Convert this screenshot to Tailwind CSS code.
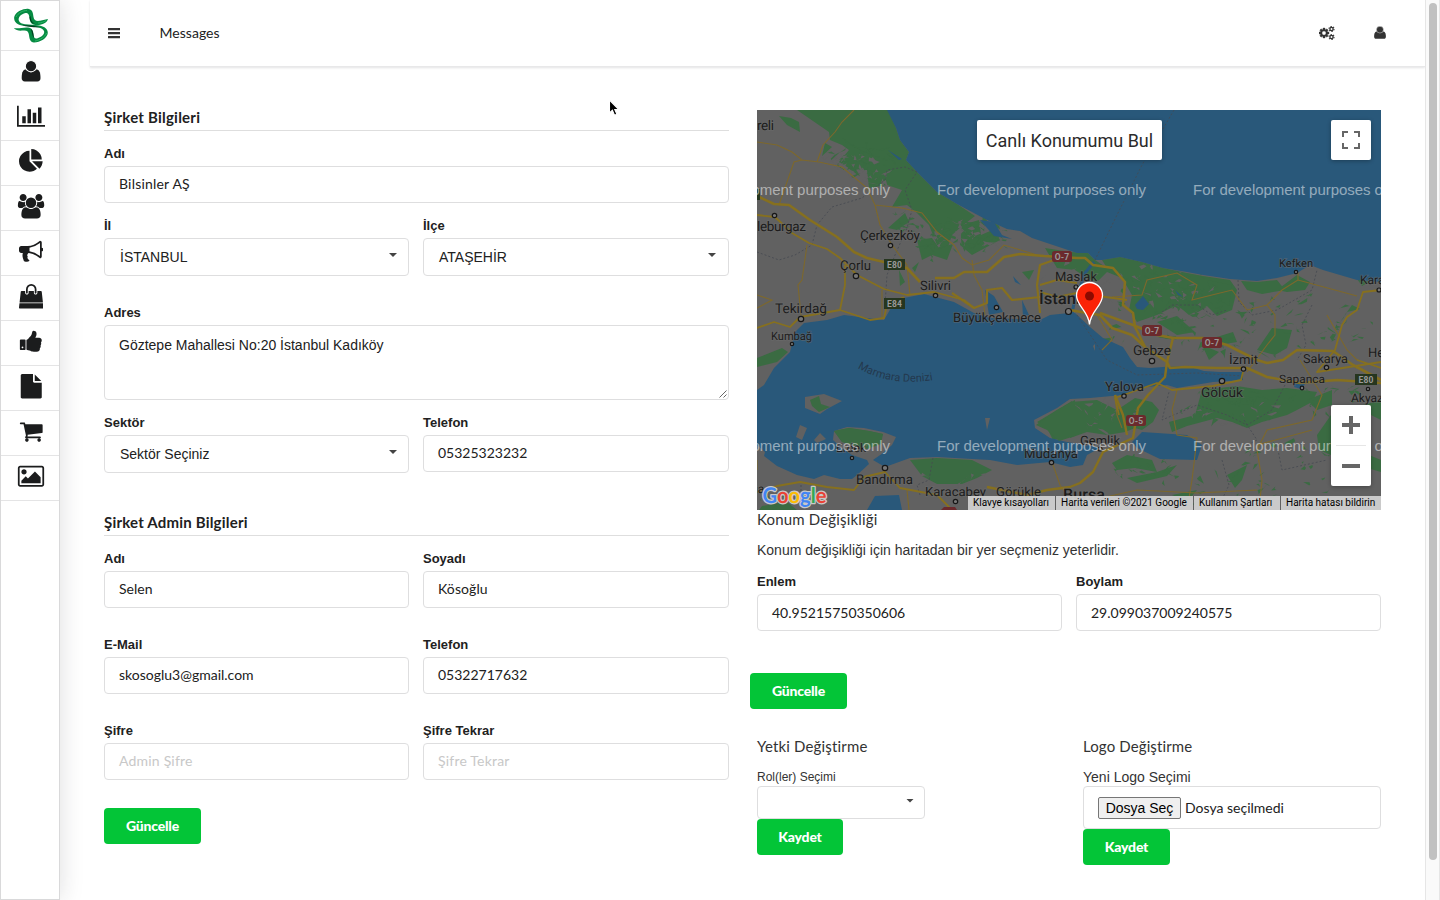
<!DOCTYPE html>
<html lang="tr">
<head>
<meta charset="utf-8">
<title>Şirket Bilgileri</title>
<script src="https://cdn.jsdelivr.net/npm/@tailwindcss/browser@4"></script>
</head>
<body class="bg-white text-[#212121] font-['Lato','Liberation_Sans',sans-serif] text-sm overflow-hidden">
<div class="flex h-[900px] w-[1440px]">

  <!-- Sidebar -->
  <aside class="w-[60px] shrink-0 h-full border border-[#d9d9da] bg-white shadow-[0_0_24px_rgba(34,36,38,0.15)] text-[#1b1c1d] [clip-path:inset(0_-30px_0_0)]">
    <div class="h-[50px] border-b border-[#e4e4e5] flex justify-center pt-[7px]">
      <svg class="w-9 h-9 ml-px" viewBox="0 0 36 36">
        <path d="M9 17.500C3 17 0 12 1.500 8C3.500 3.500 10 .5 15 .8C19.500 1.500 20 5 20.500 9C21 12.500 23 13.300 27 12.800L35 11C34 14.500 30 17 24 17C18.500 17 17 14.500 16.500 10C16 6.500 15.500 5 12.500 5C8 6 4.500 9.500 6 13C6.800 15 9 15.800 12 16.200L22 17C30 17.500 35 20 34.800 25C34.500 30 27 34.500 21 34.500C17 34 16.500 31 16 27C15.500 23.500 14 22.200 10 22.600C6 23 3 22.500 .8 20C6 21 10 19 15 19.500C19 20 20.200 22.500 20.500 26C20.800 29.500 21.500 31 24 30.500C29 29 32 26 31 23C30 20.500 27 19.500 22 19Z" fill="#068a42"/>
        <path d="M9 17.500C15 17 22 18 27 19.200C21 19.300 14 19 9 17.500ZM17.500 8C18 12 18.500 14.500 22 15.500C18.500 15.500 16.800 13 16.500 9ZM19 22C20.500 24.500 20.300 27 21 30C19 28 19.300 24 17.800 21Z" fill="#05371f"/>
        <path d="M3 9C5 5 10 2.500 14 2.400M22 33C27 32 32 29 33.500 25M25 15C28 15 31 14 33 12.500" fill="none" stroke="#2fb768" stroke-width=".9"/>
      </svg>
    </div>
    <div class="h-[45px] border-b border-[#e4e4e5] flex justify-center pt-[8.25px] pl-0.5">
      <svg class="h-[24.5px] w-7" viewBox="0 0 28 24.5" fill="currentColor"><path d="M4.700 19C4.700 12.500 6.500 10.300 9.500 10.300H18.700C21.700 10.300 23.500 12.500 23.500 19C23.500 21 22.300 22.600 20.400 22.600H7.800C5.900 22.600 4.700 21 4.700 19Z"/><circle cx="14" cy="7.200" r="5.700" stroke="#fff" stroke-width="1.100"/></svg>
    </div>
    <div class="h-[45px] border-b border-[#e4e4e5] flex justify-center pt-[8.25px] pl-0.5">
      <svg class="h-[24.5px] w-7" viewBox="0 0 2048 1792" fill="currentColor"><path d="M640 896v512h-256v-512h256zm384-512v1024h-256v-1024h256zm1024 1152v128h-2048v-1536h128v1408h1920zm-640-896v768h-256v-768h256zm384-384v1152h-256v-1152h256z"/></svg>
    </div>
    <div class="h-[45px] border-b border-[#e4e4e5] flex justify-center pt-[8.25px] pl-0.5">
      <svg class="h-[24.5px] w-[24.5px]" viewBox="0 0 1792 1792" fill="currentColor"><path d="M768 890l546 546q-106 108-247.500 168t-298.500 60q-209 0-385.500-103t-279.500-279.500-103-385.500 103-385.500 279.500-279.500 385.500-103v762zm187 6h773q0 157-60 298.500t-168 247.500zm709-128h-768v-768q209 0 385.500 103t279.500 279.500 103 385.500z"/></svg>
    </div>
    <div class="h-[45px] border-b border-[#e4e4e5] flex justify-center pt-[8.25px] pl-0.5">
      <svg class="h-[24.5px] w-7" viewBox="0 0 2048 1792" fill="currentColor"><path d="M657 896q-162 5-265 128h-134q-82 0-138-40.500t-56-118.500q0-353 124-353 6 0 43.500 21t97.500 42.500 119 21.500q67 0 133-23-5 37-5 66 0 159 90 256zm1071 637q0 120-73 189.500t-194 69.500h-874q-121 0-194-69.500t-73-189.500q0-53 3.500-103.500t14-109 26.500-108.500 43-97.500 62-81 85.500-53.500 111.500-20q10 0 43 21.500t73 48 107 48 135 21.500 135-21.500 107-48 73-48 43-21.500q61 0 111.500 20t85.500 53.500 62 81 43 97.500 26.500 108.500 14 109 3.500 103.500zm-1024-1277q0 106-75 181t-181 75-181-75-75-181 75-181 181-75 181 75 75 181zm704 384q0 159-112.500 271.500t-271.500 112.500-271.500-112.500-112.500-271.500 112.500-271.500 271.500-112.500 271.500 112.500 112.500 271.500zm576 225q0 78-56 118.500t-138 40.500h-134q-103-123-265-128 90-97 90-256 0-29-5-66 66 23 133 23 59 0 119-21.500t97.500-42.500 43.500-21q124 0 124 353zm-128-609q0 106-75 181t-181 75-181-75-75-181 75-181 181-75 181 75 75 181z"/></svg>
    </div>
    <div class="h-[45px] border-b border-[#e4e4e5] flex justify-center pt-[8.25px] pl-0.5">
      <svg class="h-[24.5px] w-[24.5px]" viewBox="0 0 1792 1792" fill="currentColor"><path d="M1664 640q53 0 90.500 37.500t37.500 90.500-37.500 90.500-90.500 37.500v384q0 52-38 90t-90 38q-417-347-812-380-58 19-91 66t-31 100.500 40 92.500q-20 33-23 65.500t6 58 33.500 55 48 50 61.500 50.500q-29 58-111.500 83t-168.500 11.500-132-55.500q-7-23-29.500-87.500t-32-94.500-23-89-15-101 3.500-98.500 22-110.500h-122q-66 0-113-47t-47-113v-192q0-66 47-113t113-47h480q435 0 896-384 52 0 90 38t38 90v384zm-128 604v-954q-394 302-768 343v270q377 42 768 341z"/></svg>
    </div>
    <div class="h-[45px] border-b border-[#e4e4e5] flex justify-center pt-[8.25px] pl-0.5">
      <svg class="h-[24.5px] w-[24.5px]" viewBox="0 0 1792 1792" fill="currentColor"><path d="M1757 1408l35 313q3 28-16 50-19 21-48 21h-1664q-29 0-48-21-19-22-16-50l35-313h1722zm-93-839l86 775h-1708l86-775q3-24 21-40.500t43-16.500h256v128q0 53 37.500 90.500t90.500 37.500 90.500-37.500 37.500-90.500v-128h384v128q0 53 37.500 90.500t90.500 37.500 90.500-37.500 37.500-90.500v-128h256q25 0 43 16.500t21 40.500zm-384-185v256q0 26-19 45t-45 19-45-19-19-45v-256q0-106-75-181t-181-75-181 75-75 181v256q0 26-19 45t-45 19-45-19-19-45v-256q0-159 112.500-271.500t271.500-112.500 271.500 112.500 112.500 271.500z"/></svg>
    </div>
    <div class="h-[45px] border-b border-[#e4e4e5] flex justify-center pt-[8.25px] pl-0.5">
      <svg class="h-[24.5px] w-[24.5px]" viewBox="0 0 1792 1792" fill="currentColor"><path d="M320 1344q0-26-19-45t-45-19q-27 0-45.500 19t-18.500 45q0 27 18.500 45.500t45.500 18.500q26 0 45-18.500t19-45.500zm160-512v640q0 26-19 45t-45 19h-288q-26 0-45-19t-19-45v-640q0-26 19-45t45-19h288q26 0 45 19t19 45zm1184 0q0 86-55 149 15 44 15 76 3 76-43 137 17 56 0 117-15 57-54 94 9 112-49 181-64 76-197 78h-129q-66 0-144-15.500t-121.500-29-120.500-39.500q-123-43-158-44-26-1-45-19.500t-19-44.500v-641q0-25 18-43.500t43-20.500q24-2 76-59t101-121q68-87 101-120 18-18 31-48t17.500-48.500 13.500-60.500q7-39 12.500-61t19.500-52 34-50q19-19 45-19 46 0 82.500 10.500t60 26 40 40.500 24 45 12 50 5 45 .5 39q0 38-9.500 76t-19 60-27.500 56q-3 6-10 18t-11 22-8 24h277q78 0 135 57t57 135z"/></svg>
    </div>
    <div class="h-[45px] border-b border-[#e4e4e5] flex justify-center pt-[8.25px] pl-0.5">
      <svg class="h-[24.5px] w-[24.5px]" viewBox="0 0 1792 1792" fill="currentColor"><path d="M1152 512v-472q22 14 36 28l408 408q14 14 28 36h-472zm-128 32q0 40 28 68t68 28h544v1056q0 40-28 68t-68 28h-1344q-40 0-68-28t-28-68v-1600q0-40 28-68t68-28h800v544z"/></svg>
    </div>
    <div class="h-[45px] border-b border-[#e4e4e5] flex justify-center pt-[8.25px] pl-0.5">
      <svg class="h-[24.5px] w-[24.5px]" viewBox="0 0 1792 1792" fill="currentColor"><path d="M704 1536q0 52-38 90t-90 38-90-38-38-90 38-90 90-38 90 38 38 90zm896 0q0 52-38 90t-90 38-90-38-38-90 38-90 90-38 90 38 38 90zm128-1088v512q0 24-16.500 42.500t-40.500 21.500l-1044 122q13 60 13 70 0 16-24 64h920q26 0 45 19t19 45-19 45-45 19h-1024q-26 0-45-19t-19-45q0-11 8-31.500t16-36 21.500-40 15.500-29.500l-177-823h-204q-26 0-45-19t-19-45 19-45 45-19h256q16 0 28.500 6.500t19.500 15.500 13 24.500 8 26 5.500 29.500 4.500 26h1201q26 0 45 19t19 45z"/></svg>
    </div>
    <div class="h-[45px] border-b border-[#e4e4e5] flex justify-center pt-[8.25px] pl-0.5">
      <svg class="h-[24.5px] w-7" viewBox="0 0 2048 1792" fill="currentColor"><path d="M704 576q0 80-56 136t-136 56-136-56-56-136 56-136 136-56 136 56 56 136zm1024 384v448h-1408v-192l320-320 160 160 512-512zm96-704h-1600q-13 0-22.500 9.500t-9.500 22.500v1216q0 13 9.500 22.500t22.500 9.500h1600q13 0 22.500-9.500t9.500-22.500v-1216q0-13-9.500-22.500t-22.500-9.500zm160 32v1216q0 66-47 113t-113 47h-1600q-66 0-113-47t-47-113v-1216q0-66 47-113t113-47h1600q66 0 113 47t47 113z"/></svg>
    </div>
  </aside>

  <div class="w-[1365px] shrink-0 pl-[30px]">
    <!-- Top bar -->
    <header class="h-[67px] bg-white border-b border-[#e8e8e9] shadow-[0_1px_2px_rgba(34,36,38,0.12)] flex items-center text-[#333]">
      <svg class="ml-[18px] w-3 h-3" viewBox="0 0 12 12" fill="currentColor"><rect y="1" width="12.300" height="2.200" rx=".3"/><rect y="5" width="12.300" height="2.200" rx=".3"/><rect y="9" width="12.300" height="2.200" rx=".3"/></svg>
      <span class="ml-[39.500px] text-[14px] tracking-[0.03px] text-[#212121]">Messages</span>
      <svg class="ml-auto w-[16px] h-[14px]" viewBox="0 0 2048 1792" fill="currentColor">
        <path d="M896 896q0-106-75-181t-181-75-181 75-75 181 75 181 181 75 181-75 75-181zm384-91v185q0 10-7 19.500t-16 10.500l-155 24q-11 35-32 76 34 48 90 115 7 11 7 20 0 12-7 19-23 30-82.500 89.500t-78.500 59.500q-11 0-21-7l-115-90q-37 19-77 31-11 108-23 155-7 24-30 24h-186q-11 0-20-7.500t-10-17.500l-23-153q-34-10-75-31l-118 89q-7 7-20 7-11 0-21-8-144-133-144-160 0-9 7-19 10-14 41-53t47-61q-23-44-35-82l-152-24q-10-1-17-9.500t-7-19.500v-185q0-10 7-19.500t16-10.500l155-24q11-35 32-76-34-48-90-115-7-11-7-20 0-12 7-20 22-30 82-89t79-59q11 0 21 7l115 90q34-18 77-32 11-108 23-154 7-24 30-24h186q11 0 20 7.500t10 17.500l23 153q34 10 75 31l118-89q8-7 20-7 11 0 21 8 144 133 144 160 0 8-7 19-12 16-42 54t-45 60q23 48 34 82l152 23q10 2 17 10.500t7 19.500z" stroke="currentColor" stroke-width="50"/>
        <g fill="none" stroke="currentColor"><circle cx="1600" cy="384" r="210" stroke-width="170"/><circle cx="1600" cy="384" r="330" stroke-width="130" stroke-dasharray="173 172.500"/><circle cx="1600" cy="1408" r="210" stroke-width="170"/><circle cx="1600" cy="1408" r="330" stroke-width="130" stroke-dasharray="173 172.500"/></g>
      </svg>
      <svg class="ml-[39.500px] mr-[39px] w-[12px] h-[13px] mb-px" viewBox="4.500 1 19.200 22" preserveAspectRatio="none" fill="currentColor"><path d="M4.700 19C4.700 12.500 6.500 10.300 9.500 10.300H18.700C21.700 10.300 23.500 12.500 23.500 19C23.500 21 22.300 22.600 20.400 22.600H7.800C5.900 22.600 4.700 21 4.700 19Z"/><circle cx="14" cy="7.200" r="5.700" stroke="#fff" stroke-width=".7"/></svg>
    </header>

    <main class="flex pl-[14px] pt-[43px]">
      <!-- Company form -->
      <section class="w-[625px] shrink-0">
        <h4 class="h-[21px] border-b border-[#dedede] text-[15px] leading-[14px] font-bold tracking-[0.23px]">Şirket Bilgileri</h4>
        <label class="block mt-[15px] h-4 leading-4 mb-1 text-[13px] font-bold font-['Liberation_Sans',sans-serif]">Adı</label>
        <div class="h-[37px] border border-[#dededf] rounded flex items-center px-[14px] pb-px tracking-[0.2px]">Bilsinler AŞ</div>
        <div class="mt-[15px] grid grid-cols-[305px_306px] gap-[14px]">
          <div>
            <label class="block h-4 leading-4 mb-1 text-[13px] font-bold font-['Liberation_Sans',sans-serif]">İl</label>
            <div class="h-[38px] border border-[#dededf] rounded flex items-center justify-between pl-[15px] pr-[11px] font-['Liberation_Sans',sans-serif]">İSTANBUL<svg class="w-2 h-1 mb-1" viewBox="0 0 8 4"><path d="M0 0H8L4 4Z" fill="#444"/></svg></div>
          </div>
          <div>
            <label class="block h-4 leading-4 mb-1 text-[13px] font-bold font-['Liberation_Sans',sans-serif]">İlçe</label>
            <div class="h-[38px] border border-[#dededf] rounded flex items-center justify-between pl-[15px] pr-[12px] font-['Liberation_Sans',sans-serif]">ATAŞEHİR<svg class="w-2 h-1 mb-1" viewBox="0 0 8 4"><path d="M0 0H8L4 4Z" fill="#444"/></svg></div>
          </div>
        </div>
        <label class="block mt-[29px] h-4 leading-4 mb-1 text-[13px] font-bold font-['Liberation_Sans',sans-serif]">Adres</label>
        <div class="h-[75px] border border-[#dededf] rounded flex justify-between pl-[14px] pt-[10px] font-['Liberation_Sans',sans-serif] leading-[18px]">Göztepe Mahallesi No:20 İstanbul Kadıköy<svg class="self-end w-2 h-2 mr-[1px] mb-[1px]" viewBox="0 0 8 8" stroke="#555" stroke-width=".9"><path d="M0.500 7.500L7.500 0.500M4.500 7.500L7.500 4.500"/></svg></div>
        <div class="mt-[15px] grid grid-cols-[305px_306px] gap-[14px]">
          <div>
            <label class="block h-4 leading-4 mb-1 text-[13px] font-bold font-['Liberation_Sans',sans-serif]">Sektör</label>
            <div class="h-[38px] border border-[#dededf] rounded flex items-center justify-between pl-[15px] pr-[11px] font-['Liberation_Sans',sans-serif]">Sektör Seçiniz<svg class="w-2 h-1 mb-1" viewBox="0 0 8 4"><path d="M0 0H8L4 4Z" fill="#444"/></svg></div>
          </div>
          <div>
            <label class="block h-4 leading-4 mb-1 text-[13px] font-bold font-['Liberation_Sans',sans-serif]">Telefon</label>
            <div class="h-[37px] border border-[#dededf] rounded flex items-center px-[14px] pb-px">05325323232</div>
          </div>
        </div>

        <h4 class="mt-[42px] h-[21px] border-b border-[#dedede] text-[15px] leading-[14px] font-bold tracking-[0.2px]">Şirket Admin Bilgileri</h4>
        <div class="mt-[15px] grid grid-cols-[305px_306px] gap-x-[14px] gap-y-[29px]">
          <div>
            <label class="block h-4 leading-4 mb-1 text-[13px] font-bold font-['Liberation_Sans',sans-serif]">Adı</label>
            <div class="h-[37px] border border-[#dededf] rounded flex items-center px-[14px] pb-px">Selen</div>
          </div>
          <div>
            <label class="block h-4 leading-4 mb-1 text-[13px] font-bold font-['Liberation_Sans',sans-serif]">Soyadı</label>
            <div class="h-[37px] border border-[#dededf] rounded flex items-center px-[14px] pb-px tracking-[0.1px]">Kösoğlu</div>
          </div>
          <div>
            <label class="block h-4 leading-4 mb-1 text-[13px] font-bold font-['Liberation_Sans',sans-serif]">E-Mail</label>
            <div class="h-[37px] border border-[#dededf] rounded flex items-center px-[14px] pb-px">skosoglu3@gmail.com</div>
          </div>
          <div>
            <label class="block h-4 leading-4 mb-1 text-[13px] font-bold font-['Liberation_Sans',sans-serif]">Telefon</label>
            <div class="h-[37px] border border-[#dededf] rounded flex items-center px-[14px] pb-px">05322717632</div>
          </div>
          <div>
            <label class="block h-4 leading-4 mb-1 text-[13px] font-bold font-['Liberation_Sans',sans-serif]">Şifre</label>
            <div class="h-[37px] border border-[#dededf] rounded flex items-center px-[14px] pb-px tracking-[0.2px] text-[#c8c8c8]">Admin Şifre</div>
          </div>
          <div>
            <label class="block h-4 leading-4 mb-1 text-[13px] font-bold font-['Liberation_Sans',sans-serif]">Şifre Tekrar</label>
            <div class="h-[37px] border border-[#dededf] rounded flex items-center px-[14px] pb-px tracking-[0.2px] text-[#c8c8c8]">Şifre Tekrar</div>
          </div>
        </div>
        <button class="mt-[28px] block w-[97px] h-9 rounded bg-[#03c537] text-white font-black tracking-[-0.2px] pb-px">Güncelle</button>
      </section>

      <!-- Location and settings -->
      <section class="w-[624px] shrink-0 ml-[28px]">
        <div class="relative h-[400px] overflow-hidden bg-[#616161] font-['Roboto',sans-serif]">
          <svg class="block w-[624px] h-[400px]" viewBox="0 0 624 400">
            <rect width="624" height="400" fill="#616161"/>
            <g fill="#3a6b42">
              <path d="M40 0H131L139 18L143 30L152 42L149 50L160 62L180 82L200 94L218 106L205 116L195 125L190 140L180 135L172 115L160 103L150 95L135 97L145 80L130 75L112 78L110 60L95 60L82 52L92 40L85 35L73 30L72 22Z"/>
              <path d="M22 6L34 8L42 12L43 22L30 15ZM68 33L75 37L65 46ZM131 118L148 103L152 112L140 120ZM160 130L175 128L182 138L196 134L190 150L175 145L165 150ZM205 115L222 110L224 125L240 118L243 130L228 138L215 145L203 135ZM155 158L162 152L158 162ZM142 160L148 172L143 176Z"/>
              <path d="M288 138L313 142L331 143L338 150L350 158L345 150L363 147L385 152L406 158L430 163L446 166L473 170L480 180L475 200L460 206L450 196L432 205L420 195L400 205L380 212L372 200L375 185L365 168L350 162L340 172L330 168L318 160L300 158Z"/>
              <path d="M484 171L500 172L520 170L528 180L505 184L490 180ZM520 180L540 165L553 172L548 180L530 182ZM450 170L475 175L472 196L455 185ZM595 195L603 199L590 202ZM400 212L420 206L438 222L420 225ZM450 230L476 222L480 232L462 235ZM445 235L462 242L452 250ZM515 218L535 220L530 238L518 245L500 240Z"/>
              <path d="M313 292L340 290L360 300L378 288L395 292L402 300L396 312L385 320L378 318L368 322L350 325L330 322L313 328Z"/>
              <path d="M438 305L445 280L480 276L505 280L530 278L560 282L555 292L540 300L530 305L505 312L490 318L475 312L460 308L430 316L415 322L412 312Z"/>
              <path d="M560 325L574 305L574 345L562 340ZM550 290L575 280L575 295L560 300ZM606 295L624 290V310L614 305Z"/>
              <path d="M355 353L370 345L395 350L400 362L378 358L360 360ZM370 368L400 362L420 355L410 366L380 373Z"/>
              <path d="M470 365L490 355L485 370L478 378ZM415 385L440 380L430 392ZM590 335L612 345L624 350V362L600 355Z"/>
              <path d="M153 350L180 348L215 350L235 360L220 368L205 374L180 374L165 366ZM77 321L92 318L112 321L126 324L122 332L110 338L85 332ZM280 312L300 300L315 291V326L296 330L290 318Z"/>
              <path d="M0 248L25 238L31 242L20 252L0 257ZM265 162L277 160L272 170ZM5 396L30 392L40 400H2ZM598 166L612 172L605 176Z"/>
            </g>
            <g id="woods"></g>
            <!-- Sea, straits and lakes -->
            <g fill="#29587a">
              <path d="M130 0L139 18L143 30L152 42L149 50L160 62L180 82L200 94L230 110L250 119L263 121L275 128L287 132L320 143L331 143L338 150L345 150L363 147L385 152L406 158L430 162L446 165L473 169L500 171L520 168L540 163L553 155L566 160L600 170L624 172V0Z"/>
              <path d="M0 280L7 275L17 258L33 242L38 222L47 213L70 210L87 205L110 208L127 210L134 198L147 188L167 184L197 192L217 203L233 208L260 209L283 210L293 205L312 203L318 203L333 217L346 228L366 237L373 248L380 257L393 258L406 257L430 256L447 261L463 262L486 262V270L456 272L420 278L410 275L390 277L366 285L333 288L313 289L300 298L277 310L278 318L293 328L310 332L330 335L343 338L330 345L326 355L313 357L293 352L260 355L233 350L180 347L153 348L128 357L116 350L126 343L135 335L139 327L126 322L107 318L90 317L77 321L76 330L84 337L95 345L110 350L112 354L100 365L95 369L83 369L67 365L57 369L40 365L20 356L7 346L8 342L0 335Z"/>
              <path d="M375 332L385 322L430 325L445 335L440 350L403 349L380 338ZM110 400L118 386L142 385L145 400ZM228 180L237 186L246 202L232 205ZM223 110L237 112L245 125L255 129L237 126ZM378 195L386 186L392 194L386 200L380 199ZM265 190L272 205L266 206ZM256 166L264 175L258 172ZM537 272L548 274L544 279L537 277ZM418 180L426 187L421 185ZM131 40L145 49L142 50Z"/>
              <path d="M337 152L328 163L324 175L318 188L315 204" fill="none" stroke="#29587a" stroke-width="3"/>
            </g>
            <path d="M48 287L67 284L85 291L70 299L63 304L48 298ZM39 327L43 315L50 318L45 330ZM57 330L63 323L69 329L60 333ZM228 308L233 308L230 320ZM336 236l2-2v7z" fill="#616161"/>
            <path d="M53 290L62 286L64 294L73 297L62 302L55 296ZM77 321L92 318L112 321L126 324L124 334L110 339L85 332ZM279 315L300 300L318 290V326L302 331L290 320Z" fill="#3a6b42"/>
            <!-- Borders and ferry lines -->
            <g fill="none" stroke="#454950" stroke-width=".8" stroke-dasharray="2 2">
              <path d="M0 142L22 150L38 145L55 135L60 115L75 97L105 88L115 80L128 70L130 60L148 57L160 62L148 80L155 100L150 118L138 145L130 165L128 195M417 0L385 55L360 105L338 150M481 170L482 192L495 205L520 200L555 180L560 160M555 195L545 215L549 235L540 250M528 275L515 300L490 315L470 305L440 295L405 310L412 282M176 348L172 370L160 375L163 385M320 205L350 250L380 265L440 263L486 266M465 350L472 375L460 400M520 335L525 360L570 350"/>
              <path d="M44 375V388M405 202L415 195L440 195L455 205L470 200M487 310L500 330L490 335" />
            </g>
            <!-- Minor roads -->
            <g fill="none" stroke="#7d682c" stroke-width="1.100">
              <path d="M0 32L20 35L35 42L45 50L62 52L85 57L110 78L118 95L145 98L165 103L180 122L197 135L205 148L215 155L232 150L247 135L280 145M97 0L85 12L78 22L66 35L60 52M45 50L37 52L30 72L22 95M118 95L123 115L135 135L150 155L153 185M50 135L45 170L41 175L44 205M0 185L15 190L0 198M125 180V208M215 150L217 165L225 180L228 205"/>
              <path d="M355 187L385 185L390 170L420 163L440 175L435 190L455 185L475 180L490 200L510 195L525 180L541 170V163M510 195L518 205V225L510 235L490 262M541 170L600 186M543 250L565 285L555 310L510 320L500 340L505 370L502 400M420 280L415 300L420 325L440 328L435 370L430 400M0 350V360M150 380L152 400M295 352L303 375L310 385M358 285L360 305L365 318M313 395L380 380L440 383L500 380"/>
              <path d="M570 205L590 240L600 250M500 335L555 320M340 205L355 230L345 240"/>
            </g>
            <!-- Highways -->
            <g fill="none" stroke="#86701f" stroke-width="2.600" stroke-linejoin="round">
              <path d="M0 86L17 94L32 95L53 110L80 127L97 142L110 148L127 152L150 158L163 172M178 168L197 168L207 162L230 162L247 147L263 144L287 146L320 148L328 148L336 155L356 158L368 172L366 195L376 203L378 217L388 237"/>
              <path d="M297 150L283 155L280 175L283 203M283 175L300 170L320 173M370 190L356 188L320 183L300 187L283 182M195 183L217 198L230 193L230 180L245 178L255 190L283 187" stroke-width="2.200"/>
              <path d="M343 203L376 215L400 225L416 228L446 228L470 235L500 250L510 253L526 250L540 240L576 241L596 255L624 270"/>
              <path d="M313 200L330 203L343 205L355 218L375 225L388 237L410 252L413 258L428 257L460 258L490 258L510 267L543 273L580 270L624 273"/>
              <path d="M416 228L410 252L408 267L391 285L381 298L376 328L346 342L336 362L323 373L313 377L290 380L270 385L230 377M358 285L366 305L370 325" stroke-width="2.400"/>
              <path d="M0 105L18 107L35 123L52 133L70 139L83 148L100 165L127 179L150 185L177 182L207 190L217 198M88 155V175L83 200" stroke-width="1.800"/>
              <path d="M0 218L17 212L33 217L43 207L83 200L113 210L127 208L130 195L147 187M0 382L20 376L43 372L70 377L97 380L107 367L128 362L143 378L180 385L195 400M486 262L484 270L456 276L415 280L400 273L358 288L362 305M624 180L606 182L600 200L590 207L585 215L578 240L560 262L624 252M600 250L624 258" stroke-width="1.800"/>
            </g>
            <!-- Route shields -->
            <g font-size="8.500" font-weight="700" text-anchor="middle" letter-spacing=".2">
              <g fill="#26361f"><rect x="127" y="149" width="21" height="11"/><rect x="127" y="188" width="21" height="11"/><rect x="598" y="264" width="22" height="11"/><rect x="-9" y="79" width="12" height="11"/></g>
              <g fill="#6b2a2d"><rect x="295" y="141" width="20" height="11" rx="2.500"/><rect x="385" y="215" width="20" height="11" rx="2.500"/><rect x="445" y="227" width="20" height="11" rx="2.500"/><rect x="369" y="305" width="20" height="11" rx="2.500"/><path d="M184 400l3-3h11l2 3z"/></g>
              <g fill="#999"><text x="137.500" y="158">E80</text><text x="137.500" y="196.800">E84</text><text x="609" y="273">E80</text><text x="305" y="150">O-7</text><text x="395" y="224">O-7</text><text x="455" y="236">O-7</text><text x="379" y="314">O-5</text></g>
            </g>
            <!-- Town markers -->
            <g fill="#777" stroke="#171717" stroke-width="1.200">
              <circle cx="17.500" cy="105.500" r="2.200"/><circle cx="133.500" cy="135.500" r="2.200"/><circle cx="99" cy="166" r="2.700"/><circle cx="178.500" cy="185.500" r="2.200"/><circle cx="239.500" cy="197.500" r="2.200"/><circle cx="311.500" cy="201.500" r="3"/><circle cx="319" cy="177" r="2"/><circle cx="44" cy="209" r="2.700"/><circle cx="35" cy="234" r="1.700"/><circle cx="539" cy="162" r="1.700"/><circle cx="395" cy="251" r="2.700"/><circle cx="465" cy="271" r="2.700"/><circle cx="486.500" cy="259" r="2.200"/><circle cx="569.500" cy="257.500" r="2.200"/><circle cx="545" cy="278" r="1.800"/><circle cx="611" cy="279" r="1.700"/><circle cx="367" cy="286" r="2.200"/><circle cx="95" cy="348" r="1.700"/><circle cx="128" cy="358" r="2.700"/><circle cx="294.500" cy="352.500" r="2.200"/><circle cx="198.500" cy="391.500" r="2.200"/><circle cx="343" cy="339" r="2"/><circle cx="622" cy="180" r="2"/>
            </g>
            <!-- Place names -->
            <g fill="#1c1c1c" stroke="#6e6e6e" stroke-opacity=".5" stroke-width="1.600" paint-order="stroke" font-size="13.500" text-rendering="geometricPrecision">
              <text x="0" y="19.500" textLength="17">reli</text><text x="0" y="120.500" textLength="49">leburgaz</text><text x="103" y="129.500" textLength="60">Çerkezköy</text><text x="83" y="160" textLength="31" lengthAdjust="spacingAndGlyphs">Çorlu</text><text x="163" y="179.500" font-size="13" textLength="31" lengthAdjust="spacingAndGlyphs">Silivri</text>
              <text x="298" y="170.500" font-size="13" textLength="42" lengthAdjust="spacingAndGlyphs">Maslak</text><text x="282" y="194" font-size="16" font-weight="500" textLength="60" lengthAdjust="spacingAndGlyphs">İstanbul</text><text x="196" y="211.500" font-size="13" textLength="88" lengthAdjust="spacingAndGlyphs">Büyükçekmece</text>
              <text x="18" y="203" textLength="52" lengthAdjust="spacingAndGlyphs">Tekirdağ</text><text x="14" y="230" font-size="11.500" textLength="41" lengthAdjust="spacingAndGlyphs">Kumbağ</text><text x="522" y="157" font-size="11" textLength="34" lengthAdjust="spacingAndGlyphs">Kefken</text><text x="603" y="174" font-size="12">Karasu</text>
              <text x="376" y="244.500" textLength="38" lengthAdjust="spacingAndGlyphs">Gebze</text><text x="472" y="254" font-size="13" textLength="29" lengthAdjust="spacingAndGlyphs">İzmit</text><text x="444" y="287" textLength="42" lengthAdjust="spacingAndGlyphs">Gölcük</text><text x="546" y="252.500" font-size="12.500" textLength="45" lengthAdjust="spacingAndGlyphs">Sakarya</text><text x="522" y="273" font-size="11.500" textLength="46" lengthAdjust="spacingAndGlyphs">Sapanca</text><text x="611" y="247" font-size="13">Hendek</text><text x="594" y="292" font-size="12">Akyazı</text>
              <text x="348" y="280.500" font-size="13" textLength="39" lengthAdjust="spacingAndGlyphs">Yalova</text><text x="323" y="334.500" font-size="13" textLength="40" lengthAdjust="spacingAndGlyphs">Gemlik</text><text x="267" y="348" font-size="13" textLength="54" lengthAdjust="spacingAndGlyphs">Mudanya</text><text x="306" y="390" font-size="16" font-weight="500" textLength="42" lengthAdjust="spacingAndGlyphs">Bursa</text>
              <text x="79" y="342" font-size="12" textLength="30" lengthAdjust="spacingAndGlyphs">Erdek</text><text x="99" y="373.500" textLength="57" lengthAdjust="spacingAndGlyphs">Bandırma</text><text x="168" y="385.500" font-size="12.500" textLength="61" lengthAdjust="spacingAndGlyphs">Karacabey</text><text x="239" y="385.500" font-size="12.500" textLength="45" lengthAdjust="spacingAndGlyphs">Görükle</text><text x="-6" y="383" font-size="12">ga</text>
            </g>
            <path id="sea" d="M100.500 258Q135 278 182 269" fill="none"/>
            <text fill="#24394e" font-size="11" text-rendering="geometricPrecision"><textPath href="#sea" textLength="78">Marmara Denizi</textPath></text>
            <!-- Watermark -->
            <g fill="#fff" fill-opacity=".5" font-family="Liberation Sans, sans-serif" font-size="15">
              <text x="-76" y="85" textLength="209">For development purposes only</text><text x="180" y="85" textLength="209">For development purposes only</text><text x="436" y="85" textLength="209">For development purposes only</text>
              <text x="-76" y="341" textLength="209">For development purposes only</text><text x="180" y="341" textLength="209">For development purposes only</text><text x="436" y="341" textLength="209">For development purposes only</text>
            </g>
            <path d="M332.500 214.500C331.500 201 319.500 196 319.500 185.500A13 13 0 0 1 345.500 185.500C345.500 196 333.500 201 332.500 214.500Z" fill="#fb2307" stroke="#fff" stroke-width="1.300"/>
            <circle cx="332.500" cy="186" r="4.500" fill="#8b0a00"/>
            <g font-family="Lato, sans-serif" font-weight="700" font-size="21.500" stroke="#c9c9c9" stroke-width="2.600" stroke-linejoin="round" paint-order="stroke" text-rendering="geometricPrecision"><text x="5.500" y="393" textLength="64" lengthAdjust="spacingAndGlyphs"><tspan fill="#4285f4">G</tspan><tspan fill="#ea4335">o</tspan><tspan fill="#fbbc04">o</tspan><tspan fill="#4285f4">g</tspan><tspan fill="#34a853">l</tspan><tspan fill="#ea4335">e</tspan></text></g>
          </svg>
          <div class="absolute left-[220px] top-[10px] w-[185px] h-10 rounded-[2px] bg-white shadow-[0_1px_4px_rgba(0,0,0,0.3)] text-[18px] text-[#2b2b2b] flex items-center justify-center pt-px whitespace-nowrap">Canlı Konumumu Bul</div>
          <div class="absolute left-[574px] top-[10px] w-10 h-10 rounded-[2px] bg-white shadow-[0_1px_4px_rgba(0,0,0,0.3)] flex items-center justify-center">
            <svg class="w-[18px] h-[18px]" viewBox="0 0 18 18" fill="none" stroke="#666" stroke-width="2"><path d="M1 6V1H6M12 1H17V6M17 12V17H12M6 17H1V12"/></svg>
          </div>
          <div class="absolute left-[574px] top-[295px] w-10 h-[81px] rounded-[2px] bg-white shadow-[0_1px_4px_rgba(0,0,0,0.3)] flex flex-col items-center">
            <svg class="w-10 h-10" viewBox="0 0 40 40" stroke="#666" stroke-width="4"><path d="M11 20H29M20 11V29"/></svg>
            <div class="w-[30px] h-px bg-[#e6e6e6]"></div>
            <svg class="w-10 h-10" viewBox="0 0 40 40" stroke="#666" stroke-width="4"><path d="M11 20H29"/></svg>
          </div>
          <div class="absolute right-0 bottom-0 h-[14px] flex text-[10px] leading-[14px] text-black whitespace-nowrap gap-px">
            <span class="w-[87px] pl-[5px] bg-[#d0d0d0]/95">Klavye kısayolları</span>
            <span class="w-[137px] pl-[5px] bg-[#d0d0d0]/95">Harita verileri ©2021 Google</span>
            <span class="w-[86px] pl-[5px] bg-[#d0d0d0]/95">Kullanım Şartları</span>
            <span class="w-[100px] pl-[5px] bg-[#d0d0d0]/95">Harita hatası bildirin</span>
          </div>
        </div>
        <h5 class="h-5 leading-[18px] text-[15px] tracking-[0.17px] text-[#333]">Konum Değişikliği</h5>
        <p class="mt-[11px] h-[18px] leading-[18px] text-[#333] font-['Liberation_Sans',sans-serif]">Konum değişikliği için haritadan bir yer seçmeniz yeterlidir.</p>
        <div class="mt-[15px] grid grid-cols-2 gap-[14px]">
          <div>
            <label class="block h-4 leading-4 mb-1 text-[13px] font-bold font-['Liberation_Sans',sans-serif]">Enlem</label>
            <div class="h-[37px] border border-[#dededf] rounded flex items-center px-[14px]">40.95215750350606</div>
          </div>
          <div>
            <label class="block h-4 leading-4 mb-1 text-[13px] font-bold font-['Liberation_Sans',sans-serif]">Boylam</label>
            <div class="h-[37px] border border-[#dededf] rounded flex items-center px-[14px]">29.099037009240575</div>
          </div>
        </div>
        <button class="mt-[42px] -ml-[7px] block w-[97px] h-9 rounded bg-[#03c537] text-white font-black tracking-[-0.2px] pb-px">Güncelle</button>
        <div class="mt-[28px] grid grid-cols-[326px_298px]">
          <div>
            <h5 class="h-5 leading-[18px] text-[15px] tracking-[0.17px] text-[#333]">Yetki Değiştirme</h5>
            <label class="block mt-[11px] h-[18px] leading-[18px] text-[12px] text-[#333] font-['Liberation_Sans',sans-serif]">Rol(ler) Seçimi</label>
            <div class="w-[168px] h-[33px] border border-[#dededf] rounded flex items-center justify-end pr-[10px]"><svg class="w-2 h-1 mb-1" viewBox="0 0 8 4"><path d="M0.500 0H7.500L4 3.500Z" fill="#444"/></svg></div>
            <button class="block w-[86px] h-9 rounded bg-[#03c537] text-white font-black tracking-[-0.2px] pb-px">Kaydet</button>
          </div>
          <div>
            <h5 class="h-5 leading-[18px] text-[15px] tracking-[0.12px] text-[#333]">Logo Değiştirme</h5>
            <label class="block mt-[11px] h-[18px] leading-[18px] text-[#333] font-['Liberation_Sans',sans-serif]">Yeni Logo Seçimi</label>
            <div class="h-[43px] border border-[#dededf] rounded flex items-center pl-[14px]">
              <span class="w-[83px] h-[22px] border border-[#767676] rounded-[2px] bg-[#efefef] text-black font-['Liberation_Sans',sans-serif] text-center leading-5">Dosya Seç</span>
              <span class="ml-1">Dosya seçilmedi</span>
            </div>
            <button class="block w-[87px] h-9 rounded bg-[#03c537] text-white font-black tracking-[-0.2px] pb-px">Kaydet</button>
          </div>
        </div>
      </section>
    </main>
  </div>

  <!-- Scrollbar -->
  <div class="w-[15px] shrink-0 h-full bg-[#fafafa] border-l border-r border-[#e6e6e6] pt-[3px] pl-[3px]">
    <div class="w-2 h-[857px] rounded-full bg-[#c1c1c1]"></div>
  </div>
</div>

<!-- Mouse pointer -->
<svg class="absolute left-[608px] top-[99px] w-3 h-[18px]" viewBox="0 0 12 18"><path d="M1.500 1V14L4.400 11.300L6.500 16.300L8.900 15.300L6.800 10.500H10.800Z" fill="#000" stroke="#fff" stroke-width="1.100"/></svg>

<script>
  // Small woodland patches: [centre x, centre y, radius x, radius y, count, colour]
  const G = '#3a6b42', L = '#616161';
  const areas = [
    [105, 55, 35, 18, 40, G], [145, 118, 18, 14, 12, G], [195, 128, 35, 20, 40, G], [232, 125, 22, 16, 20, G],
    [95, 52, 28, 12, 22, L], [120, 68, 15, 10, 10, L], [190, 125, 30, 14, 22, L], [225, 128, 18, 12, 12, L],
    [410, 185, 60, 25, 60, G], [400, 180, 60, 22, 35, L], [450, 215, 50, 28, 45, G], [530, 215, 50, 35, 30, G],
    [300, 160, 15, 12, 12, L], [345, 305, 35, 14, 16, L], [480, 295, 60, 18, 30, G], [470, 300, 50, 14, 14, L],
    [565, 290, 40, 18, 18, G], [390, 360, 40, 12, 18, G], [540, 360, 70, 30, 24, G], [470, 380, 50, 16, 12, G],
    [360, 235, 18, 20, 8, G], [590, 215, 28, 22, 14, G], [20, 392, 22, 8, 12, G], [200, 368, 36, 5, 6, L]
  ];
  let s = 7;
  const r = () => (s = (s * 16807) % 2147483647) / 2147483647;
  let out = '';
  for (const [cx, cy, rx, ry, n, c] of areas) for (let i = 0; i < n; i++) {
    const a = r() * 6.283, d = Math.sqrt(r()), x = cx + Math.cos(a) * rx * d, y = cy + Math.sin(a) * ry * d;
    const p = () => (r() * 12 - 6).toFixed(1), q = () => (r() * 8 - 4).toFixed(1);
    out += `<path fill="${c}" d="M${x.toFixed(1)} ${y.toFixed(1)}l${p()} ${q()}l${p()} ${q()}l${q()} ${q()}z"/>`;
  }
  document.getElementById('woods').innerHTML = out;
</script>
</body>
</html>
